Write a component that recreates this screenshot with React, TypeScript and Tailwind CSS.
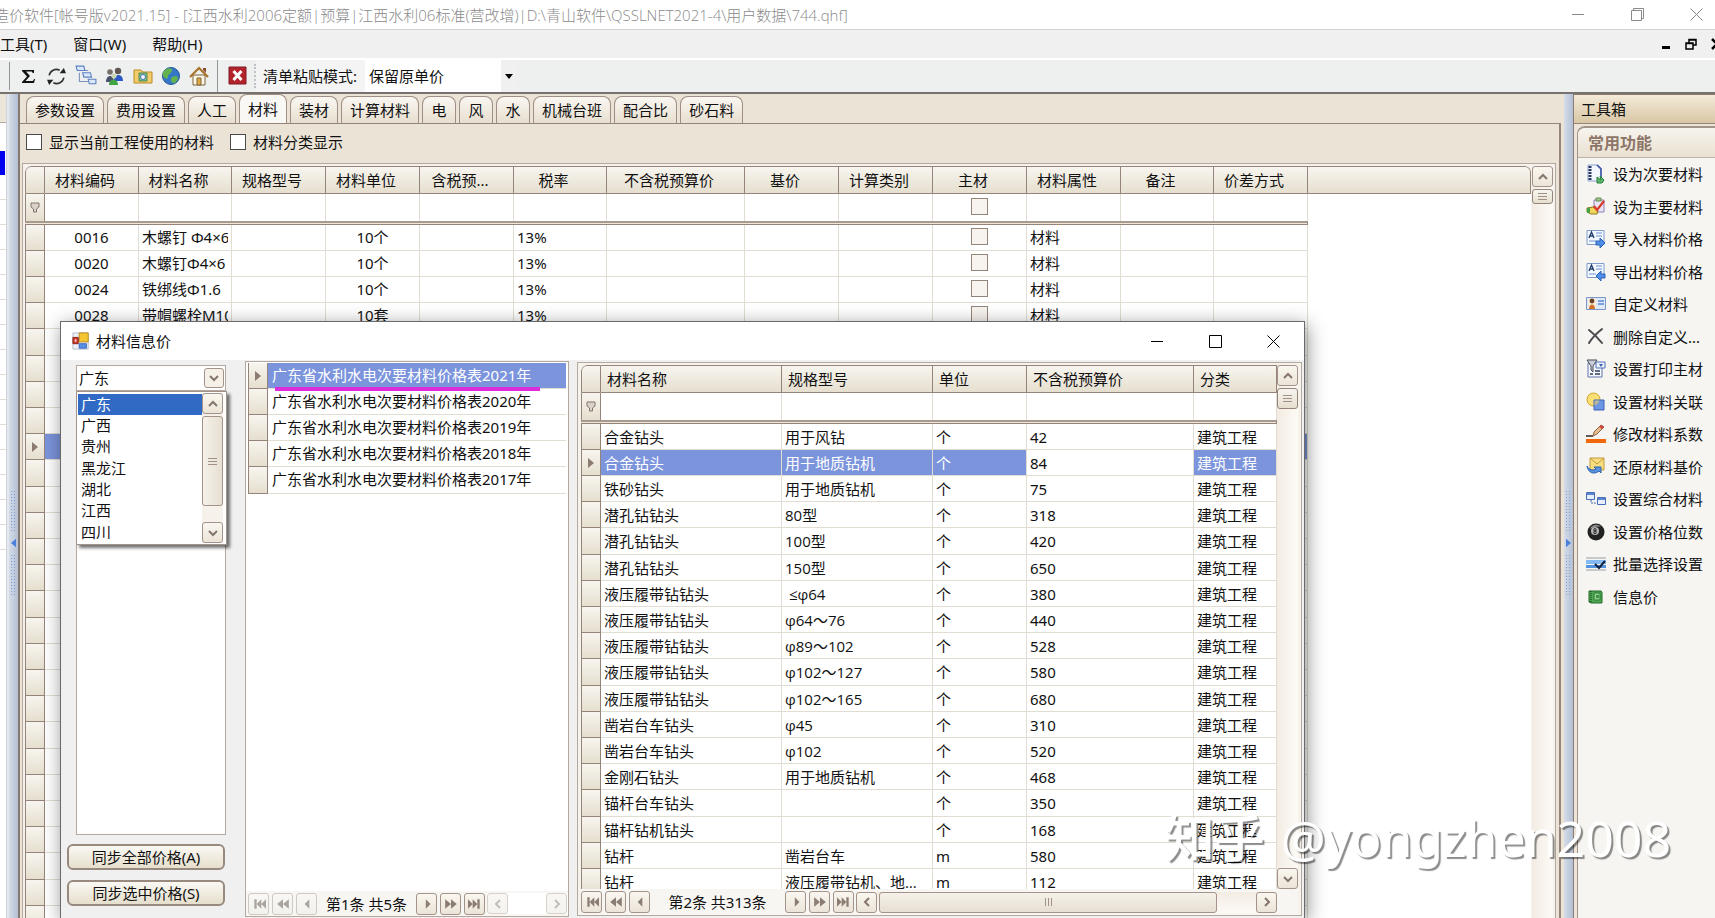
import { useState } from "react";
import type { ReactNode } from "react";
import { clsx } from "clsx";

const TABS = ["参数设置", "费用设置", "人工", "材料", "装材", "计算材料", "电", "风", "水", "机械台班", "配合比", "砂石料"];

const MATERIAL_COLUMNS = [
  { label: "材料编码", width: "w-[94px]" },
  { label: "材料名称", width: "w-[93px]" },
  { label: "规格型号", width: "w-[94px]" },
  { label: "材料单位", width: "w-[94px]" },
  { label: "含税预...", width: "w-[94px]" },
  { label: "税率", width: "w-[93px]" },
  { label: "不含税预算价", width: "w-[138px]" },
  { label: "基价", width: "w-[94px]" },
  { label: "计算类别", width: "w-[94px]" },
  { label: "主材", width: "w-[94px]" },
  { label: "材料属性", width: "w-[94px]" },
  { label: "备注", width: "w-[93px]" },
  { label: "价差方式", width: "w-[94px]" },
];

const MATERIALS = [
  { code: "0016", name: "木螺钉 Φ4×6", unit: "10个" },
  { code: "0020", name: "木螺钉Φ4×6", unit: "10个" },
  { code: "0024", name: "铁绑线Φ1.6", unit: "10个" },
  { code: "0028", name: "带帽螺栓M10", unit: "10套" },
];
const MATERIAL_ROW_COUNT = 27;
const SELECTED_MATERIAL_ROW = 8;

const PROVINCES = ["广东", "广西", "贵州", "黑龙江", "湖北", "江西", "四川"];
const YEARS = [2021, 2020, 2019, 2018, 2017];

const PRICE_COLUMNS = [
  { label: "材料名称", width: "w-[181px]" },
  { label: "规格型号", width: "w-[151px]" },
  { label: "单位", width: "w-[94px]" },
  { label: "不含税预算价", width: "w-[167px]" },
  { label: "分类", width: "" },
];

const PRICES = [
  ["合金钻头", "用于风钻", "个", "42"],
  ["合金钻头", "用于地质钻机", "个", "84"],
  ["铁砂钻头", "用于地质钻机", "个", "75"],
  ["潜孔钻钻头", "80型", "个", "318"],
  ["潜孔钻钻头", "100型", "个", "420"],
  ["潜孔钻钻头", "150型", "个", "650"],
  ["液压履带钻钻头", " ≤φ64", "个", "380"],
  ["液压履带钻钻头", "φ64～76", "个", "440"],
  ["液压履带钻钻头", "φ89～102", "个", "528"],
  ["液压履带钻钻头", "φ102～127", "个", "580"],
  ["液压履带钻钻头", "φ102～165", "个", "680"],
  ["凿岩台车钻头", "φ45", "个", "310"],
  ["凿岩台车钻头", "φ102", "个", "520"],
  ["金刚石钻头", "用于地质钻机", "个", "468"],
  ["锚杆台车钻头", "", "个", "350"],
  ["锚杆钻机钻头", "", "个", "168"],
  ["钻杆", "凿岩台车", "m", "580"],
  ["钻杆", "液压履带钻机、地质钻机", "m", "112"],
];

const HEAD = "bg-linear-to-b from-[#f7f5ef] to-[#e6dfcf] border-[#94847a]";
const ROW = "h-[26px] [&:nth-child(5n)]:h-[27px]";

/* ---------- icons ---------- */

function Icon({ children, className = "size-5" }: { children: ReactNode; className?: string }) {
  return (
    <svg viewBox="0 0 20 20" className={clsx("shrink-0", className)} fill="none" aria-hidden>
      {children}
    </svg>
  );
}

function Chevron({ dir }: { dir: "up" | "down" | "left" | "right" }) {
  const d = {
    up: "M2 8l4-4 4 4",
    down: "M2 4l4 4 4-4",
    left: "M8 2L4 6l4 4",
    right: "M4 2l4 4-4 4",
  }[dir];
  return (
    <svg viewBox="0 0 12 12" className="size-3" fill="none" stroke="currentColor" strokeWidth="2" aria-hidden>
      <path d={d} />
    </svg>
  );
}

const TOOLS: { label: string; icon: ReactNode }[] = [
  {
    label: "设为次要材料",
    icon: (
      <Icon>
        <path d="M2 1h10l3 3v13H2z" fill="#f2f6ff" stroke="#8ea2d0" />
        <path d="M4 2v14" stroke="#26345f" strokeWidth="3" strokeDasharray="2 1" />
        <path d="M11 1l4 4v8" stroke="#3c55a5" strokeWidth="1.6" />
        <path d="M11 13l4 3-1-4 4 4-2 3h-5z" fill="#5cb56b" stroke="#23813d" />
      </Icon>
    ),
  },
  {
    label: "设为主要材料",
    icon: (
      <Icon>
        <path d="M8 3h10v12H8z" fill="#e9e4f6" stroke="#8d80b5" />
        <path d="M10 1h5v3h-5z" fill="#a4c48c" stroke="#678d52" />
        <path d="M1 11l6-1 5 3-1 4H5l-4-2z" fill="#f0d55a" stroke="#8c7a20" />
        <path d="M1 11v5h3v-5z" fill="#46a245" />
        <path d="M8 9l3 4 7-9" stroke="#d93a2c" strokeWidth="2.2" />
      </Icon>
    ),
  },
  ...["导入材料价格", "导出材料价格"].map((label, i) => ({
    label,
    icon: (
      <Icon>
        <path d="M1 1.5h17v14H1z" fill="#f4f9ff" stroke="#7f9ccd" />
        <path d="M3 9l2.5-6L8 9M4 7h3" stroke="#26406f" strokeWidth="1.4" />
        <path d="M10 4h6M10 7h6M3 12h7" stroke="#6c90d8" />
        {i === 0 ? (
          <path d="M10 12h4V9l5 5-5 5v-3h-4z" fill="#4f8ee6" stroke="#2b60b8" />
        ) : (
          <path d="M19 12h-4V9l-5 5 5 5v-3h4z" fill="#4f8ee6" stroke="#2b60b8" />
        )}
      </Icon>
    ),
  })),
  {
    label: "自定义材料",
    icon: (
      <Icon>
        <path d="M.5 3.5h19v12H.5z" fill="#dfe9fa" stroke="#7d97c4" />
        <path d="M2 5h8v10H2z" fill="#f8ead9" />
        <circle cx="6" cy="7" r="2.4" fill="#6a4327" />
        <path d="M3 15c0-6 6-6 6 0z" fill="#d0742d" />
        <path d="M12 7h6M12 10h6" stroke="#5d86cf" strokeWidth="1.6" />
      </Icon>
    ),
  },
  {
    label: "删除自定义...",
    icon: (
      <Icon>
        <path d="M3 3c4 3 9 8 13 13M16 2C11 6 6 11 3 16" stroke="#4b4b4f" strokeWidth="2" strokeLinecap="round" />
      </Icon>
    ),
  },
  {
    label: "设置打印主材",
    icon: (
      <Icon>
        <path d="M2 4h14v14H2z" fill="#f6f8ff" stroke="#6074a8" />
        <path d="M1 1h10L7 7v6l-2-2V7z" fill="#c9cdd6" stroke="#484d5b" />
        <path d="M10 3h9v6h-9z" fill="#eef3ff" stroke="#5070b4" />
        <path d="M13 5h4l-2 3z" fill="#3d5fae" />
        <path d="M4 15h3M9 12h5M9 15h5" stroke="#333c58" strokeWidth="1.5" />
      </Icon>
    ),
  },
  {
    label: "设置材料关联",
    icon: (
      <Icon>
        <circle cx="7.5" cy="7.5" r="6.5" fill="#f9df74" stroke="#d3a62c" />
        <path d="M8 8h10v10H8z" fill="#6d96e4" stroke="#3c62b4" />
        <path d="M8.500 13.500A6.500 6.500 0 0 0 13.500 8.500h-5z" fill="#b7b796" />
      </Icon>
    ),
  },
  {
    label: "修改材料系数",
    icon: (
      <Icon>
        <path d="M0 15h20v4H0z" fill="#f2660c" />
        <path d="M0 12h7" stroke="#33261f" strokeWidth="1.5" />
        <path d="M7 12l1-4 7-7 3 2-7 7z" fill="#e5bd8e" stroke="#8f6646" />
        <path d="M15 1l3 2-2 2-3-2z" fill="#d7453e" />
      </Icon>
    ),
  },
  {
    label: "还原材料基价",
    icon: (
      <Icon>
        <path d="M4 1h14v12H4z" fill="#f8dd81" stroke="#c39a3a" />
        <path d="M4 1l7 6 7-6" stroke="#c39a3a" />
        <path d="M1 9c2 4 6 5 9 3l-2-2h7v6l-2-2c-5 4-11 2-12-5z" fill="#5a94e0" stroke="#2f63b0" />
      </Icon>
    ),
  },
  {
    label: "设置综合材料",
    icon: (
      <Icon>
        <path d="M.5 3.500h8v7h-8zM11.500 8.500h8v7h-8z" fill="#e6effd" stroke="#4a6db8" />
        <path d="M1 4h7v2H1zM12 9h7v2h-7z" fill="#5c85d6" />
        <path d="M5 11v3h6" stroke="#4a6db8" strokeDasharray="2 1" />
      </Icon>
    ),
  },
  {
    label: "设置价格位数",
    icon: (
      <Icon>
        <circle cx="10" cy="10" r="8.500" fill="#222" />
        <path d="M4 7c1-4 8-6 11-2-4-1-8 0-11 2z" fill="#8d8d8d" />
        <circle cx="9" cy="9" r="4" fill="#b4b4b4" />
        <circle cx="9" cy="7.800" r="1.200" stroke="#222" />
        <circle cx="9" cy="10.300" r="1.300" stroke="#222" />
      </Icon>
    ),
  },
  {
    label: "批量选择设置",
    icon: (
      <Icon>
        <path d="M0 4h20M0 16h20" stroke="#9aa0a6" />
        <path d="M0 6h20v4H0z" fill="#85b9f2" />
        <path d="M0 11h20v3H0z" fill="#5393e0" />
        <path d="M9 10l4 4 6-7" stroke="#12213c" strokeWidth="2" />
      </Icon>
    ),
  },
  {
    label: "信息价",
    icon: (
      <Icon>
        <path d="M3 4h12l1 1v11H5l-2-1z" fill="#4fa653" stroke="#226a2d" />
        <path d="M5 4v12" stroke="#1b5925" strokeWidth="1.500" strokeDasharray="1 1" />
        <path d="M8 6h6v7H8z" fill="#8fd08b" stroke="#2d7a37" />
        <path d="M10 8h3v3h-3z" fill="#3f9144" />
      </Icon>
    ),
  },
];

const TOOLBAR_LEFT: { label: string; icon: ReactNode }[] = [
  {
    label: "合计",
    icon: (
      <Icon>
        <path d="M4 4h12v3h-1.500c0-1-.5-1.500-1.500-1.500H8l4 4.500-4.500 5H14c1 0 1.500-.5 2-2h1l-1 4H4v-1l5-5.500L4 5z" fill="#111" />
      </Icon>
    ),
  },
  {
    label: "刷新",
    icon: (
      <Icon className="size-[21px]">
        <path d="M3 9a7 7 0 0 1 10-5M17 11A7 7 0 0 1 7 16" stroke="#333" strokeWidth="1.500" />
        <path d="M13 7h6l-2-5zM7 13H1l2 5z" fill="#222" />
      </Icon>
    ),
  },
  {
    label: "结构",
    icon: (
      <Icon className="size-[22px]">
        <path d="M4 7v8h8M8 5h4" stroke="#7d93bb" />
        <path d="M1 1h7l1 4H2zM7 7h7l1 4H8zM12 13h7v4h-6z" fill="#dbe8fb" stroke="#5d81c2" />
      </Icon>
    ),
  },
  {
    label: "用户",
    icon: (
      <Icon>
        <circle cx="13" cy="5" r="3.200" fill="#5f5750" />
        <path d="M9 15c0-8 9-8 9 0z" fill="#2e57c8" />
        <circle cx="5" cy="6" r="2.800" fill="#77706a" />
        <path d="M1 16c0-8 8-8 8 0z" fill="#49536a" />
        <circle cx="9" cy="10" r="2.500" fill="#c9d6b4" />
        <path d="M4 19c0-7 9-7 9 0z" fill="#3fa642" />
      </Icon>
    ),
  },
  {
    label: "文件夹",
    icon: (
      <Icon>
        <path d="M1 4h7l2 2h9v11H1z" fill="#f3cd6a" stroke="#b98a26" />
        <path d="M6 7h8v8H6z" fill="#7fbf7c" stroke="#4d8a59" />
        <circle cx="10" cy="11" r="2.500" fill="#f5f7ff" stroke="#4676b8" />
      </Icon>
    ),
  },
  {
    label: "网络",
    icon: (
      <Icon>
        <circle cx="10" cy="10" r="8.500" fill="#3577c9" stroke="#235795" />
        <path d="M4 4c4-3 8-2 7 1s-4 3-4 6-4 1-5-1 0-4 2-6zM11 11c3-2 6-1 6 1s-3 6-5 5-3-4-1-6z" fill="#62b34e" />
      </Icon>
    ),
  },
  {
    label: "主页",
    icon: (
      <Icon>
        <path d="M4 9h12v10H4z" fill="#fbf6e4" stroke="#7d6540" />
        <path d="M1 11l9-9 9 9" stroke="#a8742a" strokeWidth="2.200" />
        <path d="M14 2h3v5l-3-3z" fill="#8a4b32" />
        <path d="M8 12h4v7H8z" fill="#e0a840" stroke="#7d6540" />
      </Icon>
    ),
  },
];

/* ---------- small pieces ---------- */

function ScrollButton({ dir, disabled }: { dir: "up" | "down" | "left" | "right"; disabled?: boolean }) {
  return (
    <button
      type="button"
      disabled={disabled}
      aria-label={`scroll ${dir}`}
      className="flex size-[21px] shrink-0 items-center justify-center rounded-[3px] border border-[#a3938a] bg-linear-to-b from-[#faf7f0] to-[#ebe4d8] text-[#85766d] disabled:border-[#d8d2cb] disabled:from-[#f8f7f4] disabled:to-[#f4f3ef] disabled:text-[#c4beb8]"
    >
      <Chevron dir={dir} />
    </button>
  );
}

function Grip({ vertical }: { vertical?: boolean }) {
  return (
    <span
      className={clsx(
        "border-[#a09288]",
        vertical
          ? "h-2 w-[7px] border-x after:mx-auto after:block after:h-full after:w-px after:bg-[#a09288]"
          : "flex h-[7px] w-[9px] items-center border-y after:block after:h-px after:w-full after:bg-[#a09288]",
      )}
    />
  );
}

const NAV_PATHS: Record<string, string> = {
  first: "M2 2h2v8H2zM8 2v8L4 6zM12 2v8L8 6z",
  back: "M6 2v8L1 6zM11 2v8L6 6z",
  prev: "M8 2v8L4 6z",
  next: "M5 2v8l4-4z",
  forward: "M1 2v8l5-4zM6 2v8l5-4z",
  last: "M0 2v8l4-4zM4 2v8l4-4zM8 2h2v8H8z",
};

function NavButton({ kind, disabled }: { kind: string; disabled?: boolean }) {
  return (
    <button
      type="button"
      disabled={disabled}
      aria-label={kind}
      className="flex h-[22px] w-[21px] shrink-0 items-center justify-center rounded-[3px] border border-[#a3938a] bg-linear-to-b from-[#faf7f0] to-[#ebe4d8] text-[#8c7d74] disabled:border-[#cfc9c2] disabled:from-[#f9f8f5] disabled:to-[#f3f1ec] disabled:text-[#aaa49e]"
    >
      <svg viewBox="0 0 12 12" className="size-3.5" fill="currentColor" aria-hidden>
        <path d={NAV_PATHS[kind]} />
      </svg>
    </button>
  );
}

function Navigator({ text, atStart }: { text: string; atStart?: boolean }) {
  return (
    <>
      <div className="flex gap-[3px]">
        <NavButton kind="first" disabled={atStart} />
        <NavButton kind="back" disabled={atStart} />
        <NavButton kind="prev" disabled={atStart} />
      </div>
      <span className={clsx("text-center whitespace-nowrap", atStart ? "w-[99px]" : "w-[135px]")}>{text}</span>
      <div className="flex gap-[3px]">
        <NavButton kind="next" />
        <NavButton kind="forward" />
        <NavButton kind="last" />
      </div>
    </>
  );
}

function RowMarker({ current }: { current?: boolean }) {
  return (
    <td className={clsx("border-r border-b border-l p-0", HEAD)}>
      {current && (
        <svg viewBox="0 0 6 10" className="mx-auto h-2.5 w-1.5" aria-hidden>
          <path d="M0 0v10l6-5z" fill="#8b7b70" />
        </svg>
      )}
    </td>
  );
}

function FilterMarker() {
  return (
    <td className={clsx("border-r border-l p-0", HEAD)}>
      <svg viewBox="0 0 10 11" className="mx-auto h-[11px] w-2.5" fill="#d9d2c8" stroke="#84766c" aria-hidden>
        <path d="M1 1h8v4L6.500 7v3h-3V7L1 5z" />
      </svg>
    </td>
  );
}

function GridCheckbox({ label }: { label: string }) {
  return (
    <input
      type="checkbox"
      aria-label={label}
      className="mx-auto block size-[17px] appearance-none border border-[#94857b] bg-[#f7f3ef] checked:bg-[#8b7b70]"
    />
  );
}

function Splitter({ dir }: { dir: "left" | "right" }) {
  return (
    <div className="flex w-[9px] shrink-0 flex-col items-center bg-linear-to-r from-[#d5dde8] to-[#b3c0d4] pt-[396px]">
      <span className="h-[42px] w-[7px] bg-[radial-gradient(#7d9ed6_1px,transparent_1px)] bg-size-[3px_3px]" />
      <svg viewBox="0 0 6 10" className="my-1.5 h-2.5 w-[5px]" fill="#4d80dc" aria-hidden>
        <path d={dir === "left" ? "M6 0v10L0 5z" : "M0 0v10l6-5z"} />
      </svg>
      <span className="h-[42px] w-[7px] bg-[radial-gradient(#7d9ed6_1px,transparent_1px)] bg-size-[3px_3px]" />
    </div>
  );
}

/* ---------- main window ---------- */

function TitleBar() {
  return (
    <header className="flex h-[30px] shrink-0 items-center justify-between border-b border-[#cfd3cf] bg-white text-[#8a8a8a]">
      <h1 className="-ml-1.5 font-['Open_Sans','Noto_Sans_CJK_SC',sans-serif] text-[15px] font-light whitespace-nowrap">
        造价软件[帐号版v2021.15] - [江西水利2006定额|预算|江西水利06标准(营改增)|D:\青山软件\QSSLNET2021-4\用户数据\744.qhf]
      </h1>
      <div className="flex gap-[46px] pr-3">
        <button type="button" aria-label="最小化">
          <svg viewBox="0 0 13 13" className="size-[13px]" stroke="#8a8a8a" aria-hidden>
            <path d="M0 6.500h12" />
          </svg>
        </button>
        <button type="button" aria-label="还原">
          <svg viewBox="0 0 13 13" className="size-[13px]" stroke="#8a8a8a" fill="none" aria-hidden>
            <path d="M.5 2.500h10v10H.5zM2.500 2.500v-2h10v10h-2" />
          </svg>
        </button>
        <button type="button" aria-label="关闭">
          <svg viewBox="0 0 13 13" className="size-[13px]" stroke="#8a8a8a" aria-hidden>
            <path d="M.5.5l12 12M12.500.5l-12 12" />
          </svg>
        </button>
      </div>
    </header>
  );
}

function MenuBar() {
  return (
    <nav className="flex h-[30px] shrink-0 items-center justify-between border-b-2 border-white bg-[#f0f0f0]">
      <div className="flex gap-[26px]">
        <button type="button">工具(T)</button>
        <button type="button">窗口(W)</button>
        <button type="button">帮助(H)</button>
      </div>
      <div className="-mr-2 flex items-center gap-3.5 text-black">
        <button type="button" aria-label="最小化窗口">
          <svg viewBox="0 0 12 12" className="size-3" aria-hidden>
            <path d="M3 8h8v3H3z" />
          </svg>
        </button>
        <button type="button" aria-label="还原窗口">
          <svg viewBox="0 0 12 12" className="size-3" fill="none" stroke="currentColor" strokeWidth="1.500" aria-hidden>
            <path d="M1 5h7v6H1zM4 5V1.500h7V7H8M4 2h7M1 5.500h7" />
          </svg>
        </button>
        <button type="button" aria-label="关闭窗口">
          <svg viewBox="0 0 12 12" className="size-3" stroke="currentColor" strokeWidth="2.500" aria-hidden>
            <path d="M1 1l10 10M11 1L1 11" />
          </svg>
        </button>
      </div>
    </nav>
  );
}

function Toolbar() {
  return (
    <div className="flex h-[34px] shrink-0 items-stretch border-b-2 border-[#77726e] bg-[#eeefef]">
      <div className="flex items-center gap-2 border-r border-[#8f9499] pr-2 pl-[9px]">
        <span className="h-7 w-px bg-[#8f9499]" />
        {TOOLBAR_LEFT.map((item) => (
          <button key={item.label} type="button" aria-label={item.label}>
            {item.icon}
          </button>
        ))}
      </div>
      <button type="button" aria-label="关闭工程" className="mr-1.5 ml-2.5">
        <Icon>
          <path d="M1 1h17v17H1z" fill="#b3232c" stroke="#7e1a22" />
          <path d="M5.500 5l8 9M13.500 5l-8 9" stroke="#fff" strokeWidth="3" />
        </Icon>
      </button>
      <div className="my-1 w-px border-l-2 border-dotted border-[#bfc2c6]" />
      <label htmlFor="paste-mode" className="flex items-center bg-[#f4f4f4] pr-2 pl-[7px]">
        清单粘贴模式:
      </label>
      <div className="relative flex w-[151px] bg-white">
        <select id="paste-mode" className="w-full appearance-none bg-transparent pl-1 outline-none">
          <option>保留原单价</option>
        </select>
        <span className="pointer-events-none absolute inset-y-0 right-0 flex w-[15px] items-center justify-center bg-[#f0f0f0]">
          <svg viewBox="0 0 8 5" className="h-[5px] w-2" aria-hidden>
            <path d="M0 0h8L4 5z" />
          </svg>
        </span>
      </div>
    </div>
  );
}

function MaterialGrid() {
  return (
    <div className="flex min-h-0 flex-1 gap-px overflow-hidden border-t border-r border-l border-[#b5a89e] bg-[#f5f1ec] pt-0.5 pr-0.5 pl-0.5">
      <div className="min-w-0 flex-1 overflow-hidden rounded-t-md bg-white">
        <table className="w-full table-fixed border-separate border-spacing-0">
          <colgroup>
            <col className="w-5" />
            {MATERIAL_COLUMNS.map((col) => (
              <col key={col.label} className={col.width} />
            ))}
            <col />
          </colgroup>
          <thead>
            <tr className="h-7">
              <th className={clsx("rounded-tl-md border-t border-r border-b border-l p-0", HEAD)} />
              {MATERIAL_COLUMNS.map((col) => (
                <th key={col.label} className={clsx("overflow-hidden border-t border-r border-b p-0 pr-[13px] text-center font-normal whitespace-nowrap", HEAD)}>
                  {col.label}
                </th>
              ))}
              <th className={clsx("rounded-tr-md border-t border-r border-b p-0", HEAD)} />
            </tr>
            <tr className="h-[27px]">
              <FilterMarker />
              {MATERIAL_COLUMNS.map((col) => (
                <td key={col.label} className="border-r border-[#e2ddd2] p-0 pb-0.5">
                  {col.label === "主材" && <GridCheckbox label="筛选主材" />}
                </td>
              ))}
              <td />
            </tr>
            <tr className="h-1">
              <td colSpan={14} className="border-t-2 border-r border-b border-t-[#a89a8f] border-r-[#94847a] border-b-[#94847a] bg-[#efe6da] p-0" />
              <td className="p-0" />
            </tr>
          </thead>
          <tbody>
            {Array.from({ length: MATERIAL_ROW_COUNT }, (_, row) => {
              const item = MATERIALS[row];
              const current = row === SELECTED_MATERIAL_ROW;
              const cells = [item?.code, item?.name, "", item?.unit, "", item && "13%", "", "", "", item && <GridCheckbox label={`主材 ${item.code}`} />, item && "材料", "", ""];
              return (
                <tr key={row} className={ROW}>
                  <RowMarker current={current} />
                  {cells.map((cell, i) => (
                    <td
                      key={i}
                      className={clsx(
                        "overflow-hidden border-r border-b border-[#e2ddd2] py-0 pr-[3px] pb-0.5 pl-[3px] whitespace-nowrap",
                        (i === 0 || i === 3 || i === 9) && "text-center",
                        current && "bg-[#7b94dc]",
                      )}
                    >
                      <div className="overflow-hidden">{cell}</div>
                    </td>
                  ))}
                  <td className="p-0" />
                </tr>
              );
            })}
          </tbody>
        </table>
      </div>
      <div className="flex w-[21px] flex-col gap-0.5 bg-linear-to-r from-[#f3ece3] to-[#fdfaf6]">
        <ScrollButton dir="up" />
        <div className={clsx("flex h-[15px] items-center justify-center rounded-[3px] border", HEAD)}>
          <Grip />
        </div>
      </div>
    </div>
  );
}

function Toolbox() {
  return (
    <aside className="flex w-[142px] shrink-0 flex-col overflow-hidden border-t border-l border-[#8b7b70] bg-[#ede5d9]">
      <h2 className="flex h-[29px] shrink-0 items-center border-b border-[#94847a] bg-linear-to-b from-[#f3ead9] to-[#d9c7a5] pl-[7px]">工具箱</h2>
      <section className="mt-0.5 ml-[3px] flex-1 rounded-tl-lg border-t-2 border-l border-[#a3948a] bg-[#f6f5f1]">
        <h3 className="flex h-[30px] items-center rounded-tl-lg border-b border-[#c0b3a6] bg-linear-to-b from-[#f7f4ee] to-[#e9e1d2] pl-2.5 text-base font-bold text-[#8d7568]">常用功能</h3>
        <ul>
          {TOOLS.map((tool) => (
            <li key={tool.label} className="h-8 even:h-[33px]">
              <button type="button" className="flex h-full items-center gap-[7px] pl-2 whitespace-nowrap">
                {tool.icon}
                {tool.label}
              </button>
            </li>
          ))}
        </ul>
      </section>
    </aside>
  );
}

/* ---------- price dialog ---------- */

function ProvincePicker() {
  const [province, setProvince] = useState("广东");
  return (
    <div className="flex w-[184px] shrink-0 flex-col pt-[5px] pb-3">
      <div className="relative ml-[15px] flex h-[26px] w-[150px] border border-[#b5a89e] bg-white">
        <select
          aria-label="省份"
          value={province}
          onChange={(e) => setProvince(e.target.value)}
          className="w-full appearance-none bg-transparent pl-0.5 outline-none"
        >
          {PROVINCES.map((p) => (
            <option key={p}>{p}</option>
          ))}
        </select>
        <span className="pointer-events-none absolute top-0.5 right-px flex size-5 items-center justify-center rounded-[3px] border border-[#a3938a] bg-[#f5f1e9] text-[#85766d]">
          <Chevron dir="down" />
        </span>
      </div>
      <div className="relative ml-[15px] w-[150px] flex-1 border border-t-0 border-[#b5a89e] bg-white">
        {/* Opened list hangs over the empty box */}
        <div className="absolute top-0 -left-px flex w-[151px] border border-[#a3948a] bg-white py-px pr-[3px] pl-px shadow-[3px_3px_3px_rgba(0,0,0,0.55)]">
          <ul role="listbox" aria-label="省份列表" className="flex-1 pt-px">
            {PROVINCES.map((p) => (
              <li
                key={p}
                role="option"
                aria-selected={p === province}
                onClick={() => setProvince(p)}
                className="h-[21px] pl-[3px] leading-[21px] aria-selected:bg-[#316ac5] aria-selected:text-white [&:nth-child(3n)]:h-[22px]"
              >
                {p}
              </li>
            ))}
          </ul>
          <div className="flex w-[21px] flex-col gap-0.5 bg-[#f6f1ea]">
            <ScrollButton dir="up" />
            <div className="flex h-[90px] items-center justify-center rounded-[3px] border border-[#a3938a] bg-linear-to-r from-[#f6f2ea] to-[#e6dfd2]">
              <Grip />
            </div>
            <div className="mt-auto">
              <ScrollButton dir="down" />
            </div>
          </div>
        </div>
      </div>
      <div className="mt-[9px] ml-1.5 flex w-[158px] flex-col gap-2.5">
        {["同步全部价格(A)", "同步选中价格(S)"].map((label) => (
          <button key={label} type="button" className="h-[26px] rounded-md border-2 border-[#998a80] bg-linear-to-b from-[#faf8f3] to-[#e6dfcd] leading-5">
            {label}
          </button>
        ))}
      </div>
    </div>
  );
}

function YearList() {
  return (
    <section className="mt-px mb-px flex w-[324px] shrink-0 flex-col border border-[#b5a89e] bg-white">
      <div className="flex-1 px-0.5 pt-px">
        <table className="w-full table-fixed border-separate border-spacing-0">
          <colgroup>
            <col className="w-5" />
            <col />
          </colgroup>
          <tbody>
            {YEARS.map((year, i) => (
              <tr key={year} className={ROW}>
                <RowMarker current={i === 0} />
                <td className={clsx("relative border-b border-[#e2ddd2] py-0 pr-0 pb-0.5 pl-1", i === 0 && "bg-[#7b94dc] text-white")}>
                  广东省水利水电次要材料价格表{year}年
                  {i === 0 && <span className="absolute -bottom-[3px] left-[7px] z-10 h-1 w-[265px] bg-[#dd2bdc]" />}
                </td>
              </tr>
            ))}
          </tbody>
        </table>
      </div>
      <div className="flex h-[25px] items-center bg-[#f7f6f3] pl-0.5">
        <Navigator text="第1条 共5条" atStart />
        <div className="ml-0.5 flex flex-1 justify-between bg-white pr-px">
          <ScrollButton dir="left" disabled />
          <ScrollButton dir="right" disabled />
        </div>
      </div>
    </section>
  );
}

function PriceGrid() {
  return (
    <section className="mt-0.5 mr-0.5 mb-0.5 flex min-w-0 flex-1 flex-col overflow-hidden border border-[#b5a89e] bg-[#f6f2ec] px-[3px] pt-0.5">
      <div className="flex min-h-0 flex-1">
        <div className="min-w-0 flex-1 overflow-hidden rounded-tl-md bg-white">
          <table className="w-full table-fixed border-separate border-spacing-0">
            <colgroup>
              <col className="w-5" />
              {PRICE_COLUMNS.map((col) => (
                <col key={col.label} className={col.width} />
              ))}
            </colgroup>
            <thead>
              <tr className="h-7">
                <th className={clsx("rounded-tl-md border-t border-r border-b border-l p-0", HEAD)} />
                {PRICE_COLUMNS.map((col) => (
                  <th key={col.label} className={clsx("border-t border-r border-b py-0 pr-0 pl-1.5 text-left font-normal", HEAD)}>
                    {col.label}
                  </th>
                ))}
              </tr>
              <tr className="h-[27px]">
                <FilterMarker />
                {PRICE_COLUMNS.map((col) => (
                  <td key={col.label} className="border-r border-[#e2ddd2] p-0" />
                ))}
              </tr>
              <tr className="h-1">
                <td colSpan={6} className="border-t-2 border-r border-b border-t-[#a89a8f] border-r-[#94847a] border-b-[#94847a] bg-[#efe6da] p-0" />
              </tr>
            </thead>
            <tbody>
              {PRICES.map((price, row) => (
                <tr key={row} className={ROW}>
                  <RowMarker current={row === 1} />
                  {[...price, "建筑工程"].map((cell, i) => (
                    <td
                      key={i}
                      className={clsx(
                        "truncate border-r border-b border-[#e2ddd2] py-0 pr-2 pl-[3px] whitespace-pre",
                        i === 1 && "font-['Open_Sans','Noto_Sans_CJK_SC',sans-serif]",
                        row === 1 && i !== 3 && "bg-[#7b94dc] text-white",
                      )}
                    >
                      {cell}
                    </td>
                  ))}
                </tr>
              ))}
            </tbody>
          </table>
        </div>
        <div className="flex w-[21px] flex-col gap-0.5 bg-linear-to-r from-[#f3ece3] to-[#fdfaf6]">
          <ScrollButton dir="up" />
          <div className={clsx("flex h-[21px] items-center justify-center rounded-[3px] border", HEAD)}>
            <Grip />
          </div>
          <div className="mt-auto">
            <ScrollButton dir="down" />
          </div>
        </div>
      </div>
      <div className="flex h-[26px] shrink-0 items-center bg-[#f7f6f3]">
        <Navigator text="第2条 共313条" />
        <div className="mr-[21px] ml-0.5 flex flex-1 bg-linear-to-b from-[#f3ece3] to-[#fdfaf6]">
          <ScrollButton dir="left" />
          <div className="mr-[39px] ml-0.5 flex flex-1 items-center justify-center rounded-[3px] border border-[#a3938a] bg-linear-to-b from-[#f6f2ea] to-[#e6dfd2]">
            <Grip vertical />
          </div>
          <ScrollButton dir="right" />
        </div>
      </div>
    </section>
  );
}

function PriceDialog() {
  return (
    <div
      role="dialog"
      aria-label="材料信息价"
      className="absolute top-[321px] right-[410px] bottom-0 left-[60px] flex flex-col border-t border-r border-l border-[#6a6a6a] bg-[#f0f0f0] shadow-[2px_4px_18px_rgba(0,0,0,0.45)]"
    >
      <div className="flex h-[38px] shrink-0 items-center bg-white pr-6 pl-[11px]">
        <Icon className="size-[18px]">
          <path d="M1 1h17v18H1z" fill="#eceff6" stroke="#b4b9c6" />
          <path d="M8 1h10v10H8z" fill="#f4c52f" stroke="#b8891a" />
          <path d="M1 6h6v7H1z" fill="#c9362e" stroke="#8a2019" />
          <path d="M3 8h2v3H3z" fill="#f5c6bd" />
          <path d="M8 13h8v5H8z" fill="#5a8fe8" stroke="#3466bd" />
        </Icon>
        <h2 className="ml-1.5 flex-1">材料信息价</h2>
        <div className="flex gap-[45px]">
          <button type="button" aria-label="最小化对话框">
            <svg viewBox="0 0 13 13" className="size-[13px]" stroke="#000" aria-hidden>
              <path d="M0 6.500h12" />
            </svg>
          </button>
          <button type="button" aria-label="最大化对话框">
            <svg viewBox="0 0 13 13" className="size-[13px]" fill="none" stroke="#000" aria-hidden>
              <path d="M.5.5h12v12H.5z" />
            </svg>
          </button>
          <button type="button" aria-label="关闭对话框">
            <svg viewBox="0 0 13 13" className="size-[13px]" stroke="#000" aria-hidden>
              <path d="M.5.5l12 12M12.500.5l-12 12" />
            </svg>
          </button>
        </div>
      </div>
      <div className="flex min-h-0 flex-1">
        <ProvincePicker />
        <YearList />
        <div className="w-2 shrink-0" />
        <PriceGrid />
      </div>
    </div>
  );
}

export default function App() {
  const [tab, setTab] = useState("材料");

  return (
    <div className="relative flex h-screen flex-col overflow-hidden bg-[#ebe4d6] font-['Noto_Sans','Noto_Sans_CJK_SC',sans-serif] text-[15px] leading-5 text-[#111]">
      <TitleBar />
      <MenuBar />
      <Toolbar />

      <div className="flex min-h-0 flex-1">
        {/* Sliver of the project tree */}
        <div className="w-[7px] shrink-0 border-r border-[#d0d4dc] bg-white">
          <div className="h-[29px] border-b border-[#b5a89e] bg-[#ece6da]" />
          <div className="h-[28px]" />
          <div className="h-6 w-[5px] bg-[#0000f0]" />
          <div className="h-[375px] bg-[repeating-linear-gradient(#fff_0_24px,#e2ddd2_24px_25px)]" />
        </div>
        <div className="w-0.5 shrink-0 bg-[#e4e8ee]" />
        <Splitter dir="left" />

        <main className="flex min-w-0 flex-1 flex-col border-l-2 border-[#857870]">
          <div className="flex h-[29px] shrink-0 items-end gap-[3px] pl-1.5">
            {TABS.map((name) => (
              <button
                key={name}
                type="button"
                onClick={() => setTab(name)}
                className={clsx(
                  "min-w-[34px] rounded-t-lg border border-b-0 border-[#a08f85] px-2",
                  name === tab ? "h-[29px] bg-[#faf8f5]" : "h-[27px] bg-linear-to-b from-[#faf7f2] to-[#e7dfcf]",
                )}
              >
                {name}
              </button>
            ))}
          </div>
          <div className="mr-[3px] flex min-h-0 flex-1 flex-col border-t border-r-2 border-[#94847a] pr-[3px] pl-0.5">
            <div className="flex h-[39px] shrink-0 items-center gap-4 pb-1 pl-1">
              {["显示当前工程使用的材料", "材料分类显示"].map((label) => (
                <label key={label} className="flex items-center gap-[7px]">
                  <input type="checkbox" className="size-4 appearance-none border border-[#4a4a4a] bg-white checked:bg-[#4a4a4a]" />
                  {label}
                </label>
              ))}
            </div>
            <MaterialGrid />
          </div>
        </main>

        <Splitter dir="right" />
        <Toolbox />
      </div>

      <PriceDialog />

      <div className="pointer-events-none absolute right-[44px] bottom-[46px] flex items-center gap-4 text-[50px] leading-[68px] whitespace-nowrap text-white [text-shadow:2px_2px_1px_rgba(0,0,0,0.45)]">
        <span className="font-medium">知乎</span>
        <span>@yongzhen2008</span>
      </div>
    </div>
  );
}
